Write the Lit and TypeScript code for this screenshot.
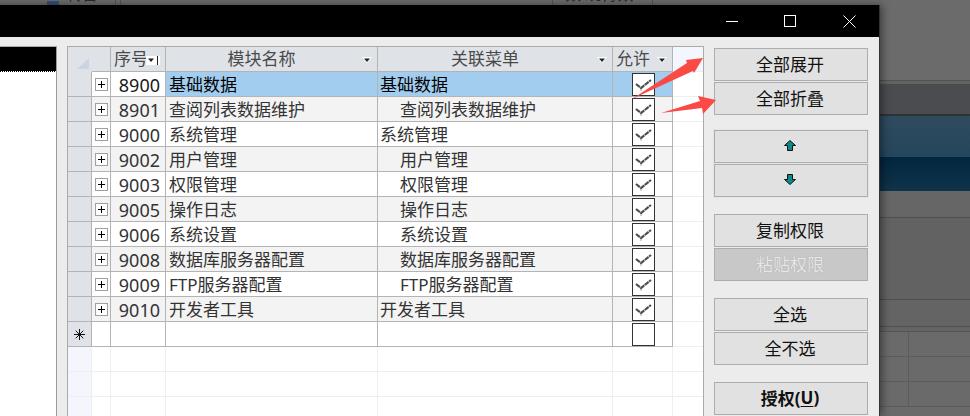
import { LitElement, html, css, svg } from "lit";
import { customElement } from "lit/decorators.js";

const rows: [string, string, string, boolean][] = [
  ["8900", "基础数据", "基础数据", false],
  ["8901", "查阅列表数据维护", "查阅列表数据维护", true],
  ["9000", "系统管理", "系统管理", false],
  ["9002", "用户管理", "用户管理", true],
  ["9003", "权限管理", "权限管理", true],
  ["9005", "操作日志", "操作日志", true],
  ["9006", "系统设置", "系统设置", true],
  ["9008", "数据库服务器配置", "数据库服务器配置", true],
  ["9009", "FTP服务器配置", "FTP服务器配置", true],
  ["9010", "开发者工具", "开发者工具", false],
];

const caret = svg`<svg class="caret" width="10" height="7" viewBox="0 0 10 7"><path d="M0 0h10L5 6z" fill="#fff"/><path d="M2 1.5h6L5 5z" fill="#222"/></svg>`;
const check = svg`<svg width="21" height="21" viewBox="0 0 21 21"><path d="M3 10 L8 14 L18 6" fill="none" stroke="#4d4d4d" stroke-width="2.2" stroke-dasharray="5 .6"/><path d="M8 15v2" stroke="#aaa" stroke-width="1"/></svg>`;
const plus = svg`<svg class="plus" width="13" height="13" viewBox="0 0 13 13"><rect x=".5" y=".5" width="12" height="12" fill="#fff" stroke="#a0a0a0"/><path d="M3 6.5h7M6.5 3v7" stroke="#000"/></svg>`;
const star = svg`<svg width="11" height="11" viewBox="0 0 11 11"><path d="M5.5 0v11M0 5.5h11M1.7 1.7l7.6 7.6M9.3 1.7l-7.6 7.6" stroke="#111" stroke-width="1"/></svg>`;

@customElement("app-root")
export class AppRoot extends LitElement {
  static styles = css`
    :host { display: block; width: 970px; height: 416px; position: relative; overflow: hidden; background: #646464; font-family: "Noto Sans", "Noto Sans CJK SC", sans-serif; }
    .bg-top { position: absolute; left: 0; top: 0; width: 100%; height: 5px; background: #6c6c6c; overflow: hidden; color: #2a2a2a; font-size: 16px; }
    .bg-top span { position: absolute; top: -17px; line-height: 22px; white-space: nowrap; }
    .bg-top i { position: absolute; top: 0; width: 1px; height: 5px; background: #555; }
    .bg-top b { position: absolute; left: 47px; top: 1px; width: 12px; height: 4px; background: #33507c; }
    .bg-right { position: absolute; left: 880px; right: 0; top: 0; bottom: 0; display: flex; flex-direction: column; background: #646464; }
    .g1 { height: 80px; background: #6b6b6b; border-bottom: 1px solid #525252; flex: none; }
    .g1b { height: 3px; background: #626262; flex: none; }
    .g2 { height: 30px; background: #4a4c4f; flex: none; border-bottom: 2px solid #2c3236; }
    .g3 { height: 41px; background: linear-gradient(#2f4b5e, #24465c); flex: none; }
    .g3b { height: 34px; background: linear-gradient(#02263f, #0f3349); flex: none; }
    .g4 { flex: none; height: 27px; background: #666; border-bottom: 1px solid #4f4f4f; box-sizing: border-box; }
    .g5 { flex: none; height: 82px; background: #626262; border-bottom: 1px solid #4f4f4f; box-sizing: border-box; }
    .g6 { flex: none; height: 27px; background: #646464; border-bottom: 1px solid #4f4f4f; box-sizing: border-box; }
    .g7 { flex: none; height: 5px; background: #646464; border-bottom: 1px solid #555; box-sizing: border-box; }
    .g8 { flex: 1; display: grid; grid-template-columns: 29px 1fr; grid-auto-rows: 25px; background: #6a6a6a; }
    .g8 div { border-right: 1px solid #5c5c5c; border-bottom: 1px solid #5c5c5c; box-sizing: border-box; }
    .g8 div:nth-child(2n) { border-right: none; }
    .window { position: absolute; left: -20px; top: 5px; width: 900px; height: 411px; box-sizing: border-box; border-right: 1px solid #333; background: #ececec; box-shadow: 2px 0 8px rgba(0,0,0,.45); display: flex; flex-direction: column; }
    .title { height: 32px; background: #000; display: flex; justify-content: flex-end; flex: none; }
    .wb { width: 59px; display: flex; align-items: center; justify-content: center; }
    .wb .mx { margin-right: 2px; }
    .body { flex: 1; display: flex; padding: 9px 0 0 0; min-height: 0; }
    .left { width: 77px; flex: none; height: 400px; background: #fff; border-top: 1px solid #aaa; border-right: 1px solid #9a9aa6; box-sizing: border-box; }
    .left .sel { height: 24px; background: #000; border-bottom: 1px dotted #fff; }
    .grid { margin-left: 10px; width: 637px; flex: none; height: 400px; border: solid #aaa; border-width: 1px 1px 0 1px; box-sizing: border-box; background: #fff; overflow: hidden; }
    .row { display: grid; grid-template-columns: 24px 19px 55px 212px 235px 60px 30px; height: 25px; box-sizing: border-box; }
    .cell { box-sizing: border-box; border-right: 1px solid #b4b4b4; border-bottom: 1px solid #b4b4b4; font-size: 17px; line-height: 24px; color: #333; white-space: nowrap; overflow: hidden; display: flex; align-items: center; }
    .hdr .cell { background: #dfe3e8; color: #4a4a4a; justify-content: center; position: relative; padding-right: 20px; }
    .hdr .lft { justify-content: flex-start; padding: 0 0 0 3px; }
    .hdr .c1 { border-right: none; border-bottom: none; }
    .hdr .c2 { padding: 0; }
    .c1 svg { position: absolute; left: 9px; top: 11px; }
    .caret { position: absolute; right: 5px; top: 10px; }
    .sort { position: absolute; left: 35px; top: 9px; width: 14px; height: 9px; background: #fff; }
    .sort .caret { right: auto; left: 0; top: 1px; }
    .sort i { position: absolute; left: 11px; top: 0; width: 1px; height: 9px; background: #222; }
    .rh { background: #dfe3e8; justify-content: center; }
    .alt .d { background: #f3f3f3; }
    .sel-row .hl { background: #a3cdef; color: #000; }
    .sel-row .num { color: #1a1a1a; }
    .num { justify-content: flex-end; padding: 1px 5px 0 0; font-size: 18px; }
    .name { padding: 1px 0 0 3px; }
    .ind { padding: 1px 0 0 22px; }
    .plain { padding: 1px 0 0 2px; }
    .exp { justify-content: center; }
    .plus { display: block; }
    .chk { justify-content: center; padding-left: 1px; }
    .box { width: 21px; height: 21px; border: 1px solid #333; background: #fff; display: flex; align-items: center; justify-content: center; box-sizing: content-box; flex: none; }
    .last { border-right: none; background: #fff; }
    .hdr .last { background: #f4f6fd; border-bottom-color: #eee; }
    .row .last { border-bottom-color: #eee; }
    .empty .cell { border-color: #efefef; background: #fff; }
    .empty .rh { background: #f5f6fd; }
    .right { margin-left: 10px; padding-top: 2px; width: 154px; flex: none; display: flex; flex-direction: column; }
    .btn { height: 33px; box-sizing: border-box; border: 1px solid #adadad; background: #e1e1e1; display: flex; align-items: center; justify-content: center; padding: 0 2px 2px 0; font-size: 17px; color: #111; margin: 0 0 1px 0; flex: none; }
    .sp { margin-top: 16px; }
    .sp0 { margin-top: 14px; }
    .hot { box-shadow: 0 0 0 1px #e5e5e5; }
    .dis { background: #c8c8c8; color: #e8e8e8; text-shadow: 0 0 1px #999; }
    .bold { font-weight: 700; }
    u { text-underline-offset: 2px; }
    .arrows { position: absolute; left: 0; top: 0; pointer-events: none; }
  `;

  render() {
    return html`
      <div class="bg-top">
        <b></b><span style="left:66px">转台</span><span style="left:565px">数 统待数</span>
        <i style="left:115px"></i><i style="left:120px"></i><i style="left:552px"></i><i style="left:652px"></i>
      </div>
      <div class="bg-right">
        <div class="g1"></div><div class="g1b"></div><div class="g2"></div><div class="g3"></div><div class="g3b"></div>
        <div class="g4"></div><div class="g5"></div><div class="g6"></div><div class="g7"></div>
        <div class="g8"><div></div><div></div><div></div><div></div><div></div><div></div></div>
      </div>
      <div class="window">
        <div class="title">
          <div class="wb"><svg width="12" height="12"><path d="M0 6.5h12" stroke="#fff"/></svg></div>
          <div class="wb"><svg class="mx" width="12" height="12"><rect x=".5" y=".5" width="11" height="11" fill="none" stroke="#fff"/></svg></div>
          <div class="wb"><svg width="13" height="13"><path d="M.5.5l12 12M12.5.5l-12 12" stroke="#fff"/></svg></div>
        </div>
        <div class="body">
          <div class="left"><div class="sel"></div></div>
          <div class="grid">
            <div class="row hdr">
              <div class="cell c1"><svg width="12" height="11"><path d="M12 0v11H0z" fill="#c9d5e4"/></svg></div>
              <div class="cell c2"></div>
              <div class="cell lft">序号<span class="sort">${caret}<i></i></span></div>
              <div class="cell">模块名称${caret}</div>
              <div class="cell">关联菜单${caret}</div>
              <div class="cell lft">允许${caret}</div>
              <div class="cell last"></div>
            </div>
            ${rows.map((r, i) => html`
              <div class="row ${i % 2 ? "alt" : ""} ${i === 0 ? "sel-row" : ""}">
                <div class="cell rh"></div>
                <div class="cell exp d">${plus}</div>
                <div class="cell num d">${r[0]}</div>
                <div class="cell name d hl">${r[1]}</div>
                <div class="cell ${r[3] ? "ind" : "plain"} d hl">${r[2]}</div>
                <div class="cell chk d hl"><span class="box">${check}</span></div>
                <div class="cell last"></div>
              </div>`)}
            <div class="row">
              <div class="cell rh">${star}</div>
              <div class="cell"></div><div class="cell"></div><div class="cell"></div><div class="cell"></div>
              <div class="cell chk"><span class="box"></span></div>
              <div class="cell last"></div>
            </div>
            ${[0, 1, 2].map(() => html`
              <div class="row empty">
                <div class="cell rh"></div><div class="cell"></div><div class="cell"></div><div class="cell"></div><div class="cell"></div><div class="cell"></div><div class="cell last"></div>
              </div>`)}
          </div>
          <div class="right">
            <div class="btn">全部展开</div>
            <div class="btn">全部折叠</div>
            <div class="btn sp0 hot"><svg width="12" height="11"><path d="M6 .5L11.5 5.5H8.5V10.5H3.5V5.5H.5z" fill="#0a8a8a" stroke="#111"/></svg></div>
            <div class="btn hot"><svg width="12" height="11"><path d="M6 10.5L11.5 5.5H8.5V.5H3.5V5.5H.5z" fill="#0a8a8a" stroke="#111"/></svg></div>
            <div class="btn sp">复制权限</div>
            <div class="btn dis">粘贴权限</div>
            <div class="btn sp">全选</div>
            <div class="btn">全不选</div>
            <div class="btn sp bold">授权(<u>U</u>)</div>
          </div>
        </div>
      </div>
      <svg class="arrows" width="970" height="416">
        <path d="M703 58 L686 60 L687 63 L632 99 L693 71 L694 73z" fill="#fb4a45"/>
        <path d="M716 100 L698 96 L700 101 L661 113 L702 108 L703 114z" fill="#fb4a45"/>
      </svg>
    `;
  }
}
